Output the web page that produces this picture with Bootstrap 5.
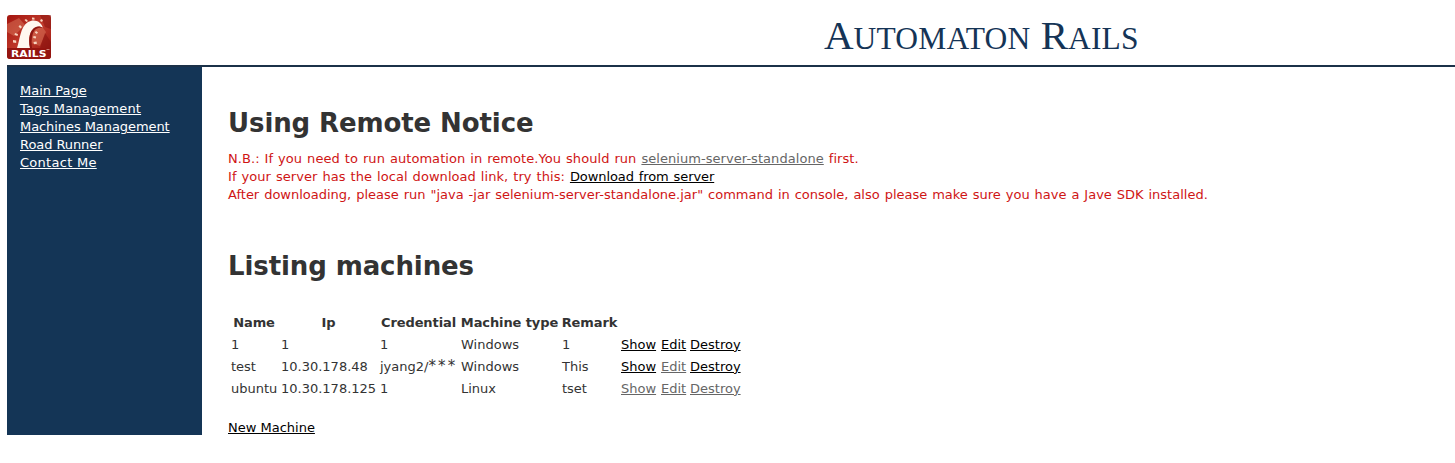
<!DOCTYPE html>
<html lang="en">
<head>
<meta charset="utf-8">
<meta name="viewport" content="width=device-width, initial-scale=1">
<title>Automaton Rails</title>
<link href="https://cdn.jsdelivr.net/npm/bootstrap@5.3.0/dist/css/bootstrap.min.css" rel="stylesheet">
<style>
  body { font-family: Verdana, "DejaVu Sans", sans-serif; font-size: 13px; line-height: 18px; color: #333; background: #fff; overflow: hidden; }
  a, a:hover { color: #000; }
  a.visited { color: #666; }
  a { text-underline-offset: 1px; text-decoration-thickness: 1px; }
  .banner { height: 60px; margin: 7px 0 0 7px; border-bottom: 2px solid #1b3148; }
  .logo { width: 44px; height: 44px; margin-top: 8px; }
  .site-title { font: 41px/56px "Liberation Serif", serif; color: #153456; padding-left: 773px; white-space: nowrap; text-transform: uppercase; }
  .site-title span { font-size: 31.5px; letter-spacing: .15px; }
  .side { width: 195px; height: 368px; margin-left: 7px; padding: 15px 13px; background: #143556; }
  .side a { color: #fff; }
  .side .wide { letter-spacing: .17px; }
  .side .wider { letter-spacing: .28px; }
  .side .tight { letter-spacing: -.07px; }
  .main { padding: 39px 0 0 26px; }
  h1 { font-size: 26px; line-height: 34px; font-weight: bold; margin: 0; white-space: nowrap; letter-spacing: -.1px; }
  .notice { color: #cf1515; margin-top: 10px; white-space: nowrap; word-spacing: .8px; }
  .notice .wide { letter-spacing: .055px; }
  .notice .wide .local { letter-spacing: -.08px; }
  .listing { margin-top: 45px; }
  .machines { table-layout: fixed; width: 516px; margin-top: 29px; }
  .machines th, .machines td { height: 22px; padding: 0 0 0 3px; white-space: nowrap; line-height: 18px; }
  .machines th { text-align: center; letter-spacing: -.1px; padding-left: 2px; }
  .machines .stars { letter-spacing: 2.2px; font-size: 15px; line-height: 1; }
  .add { margin-top: 19px; }
</style>
</head>
<body>
<header class="banner d-flex">
  <svg class="logo flex-shrink-0" viewBox="0 0 44 44" role="img" aria-label="Rails">
    <defs><linearGradient id="red" x2="1" y2="1"><stop stop-color="#a3150f"/><stop offset=".5" stop-color="#c03a2b"/><stop offset="1" stop-color="#96120e"/></linearGradient></defs>
    <rect width="44" height="44" rx="3" fill="url(#red)"/>
    <path d="M0 9L12 3 18 10 7 21 0 17zM31 6L39 17 33 31 24 28 26 16z" fill="#d9775c" opacity=".5"/>
    <path d="M33 0H44V14L38 12zM38 18L44 27V33H33z" fill="#7f0d0a" opacity=".45"/>
    <path d="M10 33C13 25 13 12 21 7c6-3.500 13-1 15 6-2-1.500-5-2-8-.5-5 3-7 10-5 20.500z" fill="#fff8f0"/>
    <path d="M36 13c-2-1.500-5-2-8-.5-5 3-7 10-5 20.500h2c-1-9 0-16 4-19 2-1 4-1.500 7-1z" fill="#8d1712"/>
    <g fill="#f8d4bf"><path d="M6 25l3.200.5v2.500L6 27.500zM8 18l3 1-.5 2-3-1zM13 10l2 2-1.500 1.500-2-2zM19 4l2 2-1.500 1-2-2zM25 2.500l2.500.3v2L25 4.500zM34 4l2 1-1 2-2-1zM29 16l2 1.500-1.200 1.500-2-1.500zM26.500 21l2.700.5-.5 2-2.500-.5zM26.500 27l3-.5.5 2.200-3 .5z"/></g>
    <path d="M0 33h44v8a3 3 0 0 1-3 3H3a3 3 0 0 1-3-3z" fill="#951510"/>
    <text x="4" y="41.500" textLength="35.500" lengthAdjust="spacingAndGlyphs" font-family="DejaVu Sans, sans-serif" font-size="9" font-weight="bold" fill="#fff">RAILS</text>
    <path d="M39.500 34.500h3" stroke="#e7aaa0" stroke-width=".7"/>
  </svg>
  <div class="site-title">A<span>utomaton</span> R<span>ails</span></div>
</header>
<div class="d-flex">
  <nav class="side d-flex flex-column align-items-start flex-shrink-0">
    <a href="#">Main Page</a>
    <a class="wide" href="#">Tags Management</a>
    <a class="tight" href="#">Machines Management</a>
    <a class="tight" href="#">Road Runner</a>
    <a class="wider" href="#">Contact Me</a>
  </nav>
  <main class="main flex-grow-1">
    <h1>Using Remote Notice</h1>
    <p class="notice mb-0"><span class="wide">N.B.: If you need to run automation in remote.You should run <a class="visited" href="#">selenium-server-standalone</a> first.<br>
      If your server has the local download link, try this: <a class="local" href="#">Download from server</a></span><br>
      After downloading, please run "java -jar selenium-server-standalone.jar" command in console, also please make sure you have a Jave SDK installed.</p>
    <h1 class="listing">Listing machines</h1>
    <table class="machines">
      <colgroup><col style="width:50px"><col style="width:99px"><col style="width:81px"><col style="width:101px"><col style="width:59px"><col style="width:40px"><col style="width:29px"><col style="width:57px"></colgroup>
      <thead><tr><th>Name</th><th>Ip</th><th>Credential</th><th>Machine type</th><th>Remark</th><th></th><th></th><th></th></tr></thead>
      <tbody>
        <tr><td>1</td><td>1</td><td>1</td><td>Windows</td><td>1</td><td><a href="#">Show</a></td><td><a href="#">Edit</a></td><td><a href="#">Destroy</a></td></tr>
        <tr><td>test</td><td>10.30.178.48</td><td>jyang2/<span class="stars">***</span></td><td>Windows</td><td>This</td><td><a href="#">Show</a></td><td><a class="visited" href="#">Edit</a></td><td><a href="#">Destroy</a></td></tr>
        <tr><td>ubuntu</td><td>10.30.178.125</td><td>1</td><td>Linux</td><td>tset</td><td><a class="visited" href="#">Show</a></td><td><a class="visited" href="#">Edit</a></td><td><a class="visited" href="#">Destroy</a></td></tr>
      </tbody>
    </table>
    <div class="add"><a href="#">New Machine</a></div>
  </main>
</div>
<script src="https://cdn.jsdelivr.net/npm/bootstrap@5.3.0/dist/js/bootstrap.bundle.min.js"></script>
</body>
</html>
